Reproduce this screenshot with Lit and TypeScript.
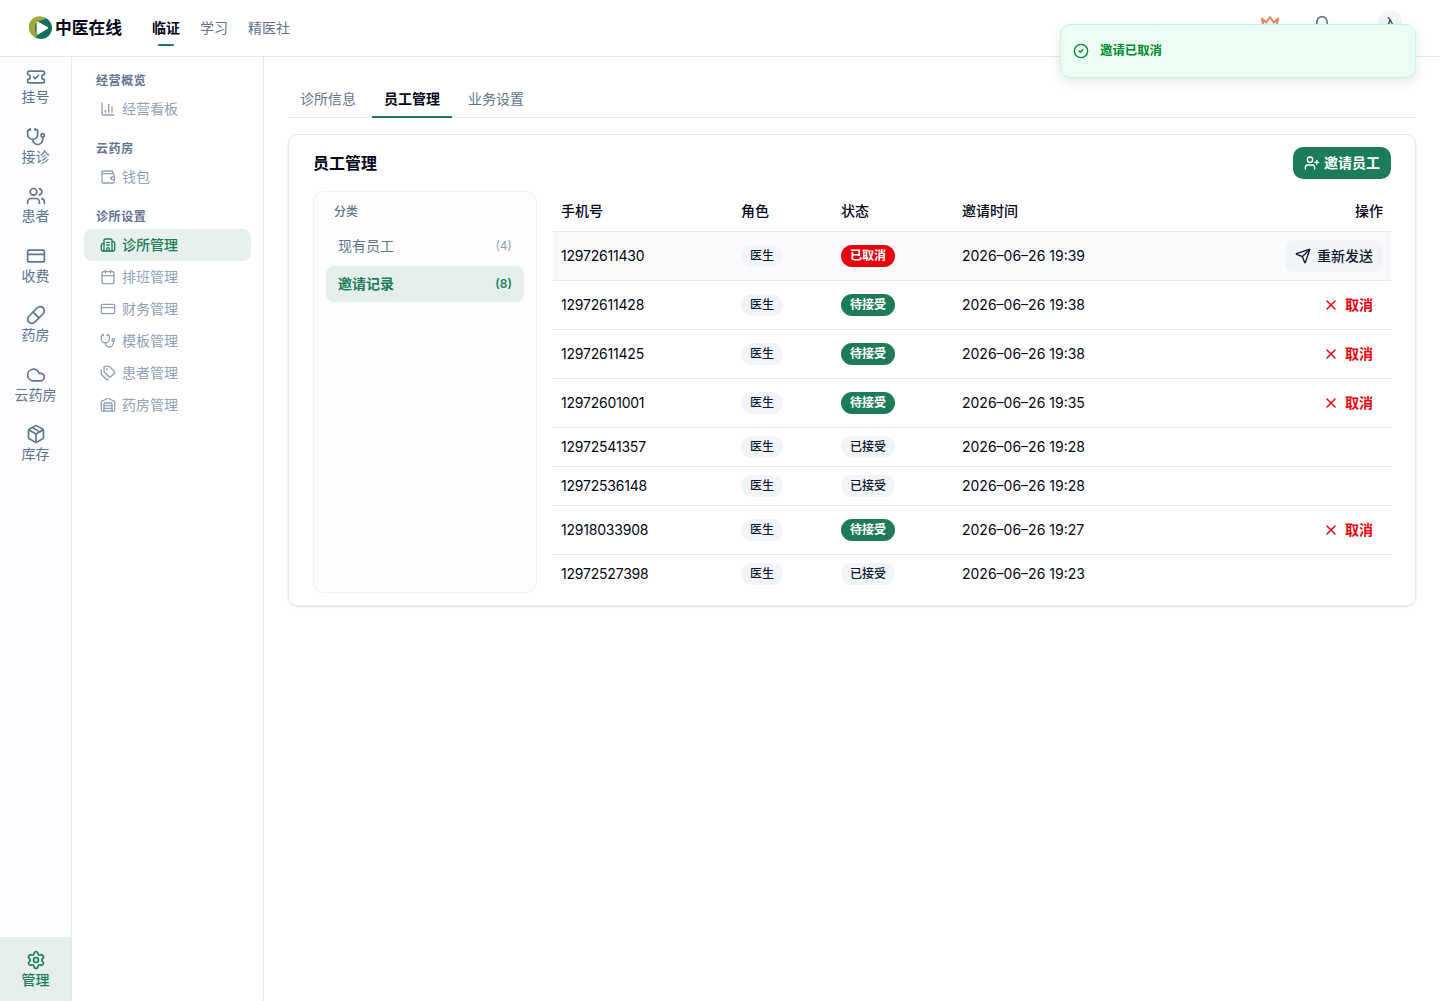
import { LitElement, html, css, svg, nothing } from "lit";
import { customElement, property } from "lit/decorators.js";
import { classMap } from "lit/directives/class-map.js";

const ICONS: Record<string, unknown> = {
  ticket: svg`<path d="M2 9a3 3 0 1 1 0 6v2a2 2 0 0 0 2 2h16a2 2 0 0 0 2-2v-2a3 3 0 1 1 0-6V7a2 2 0 0 0-2-2H4a2 2 0 0 0-2 2Z"/><path d="m9 12 2 2 4-4"/>`,
  stethoscope: svg`<path d="M11 2v2"/><path d="M5 2v2"/><path d="M5 3H4a2 2 0 0 0-2 2v4a6 6 0 0 0 12 0V5a2 2 0 0 0-2-2h-1"/><path d="M8 15a6 6 0 0 0 12 0v-3"/><circle cx="20" cy="10" r="2"/>`,
  users: svg`<path d="M16 21v-2a4 4 0 0 0-4-4H6a4 4 0 0 0-4 4v2"/><path d="M16 3.128a4 4 0 0 1 0 7.744"/><path d="M22 21v-2a4 4 0 0 0-3-3.87"/><circle cx="9" cy="7" r="4"/>`,
  card: svg`<rect width="20" height="14" x="2" y="5" rx="2"/><path d="M2 10h20"/>`,
  pill: svg`<path d="m10.5 20.5 10-10a4.95 4.95 0 1 0-7-7l-10 10a4.95 4.95 0 1 0 7 7Z"/><path d="m8.5 8.5 7 7"/>`,
  cloud: svg`<path d="M17.5 19H9a7 7 0 1 1 6.71-9h1.79a4.5 4.5 0 1 1 0 9Z"/>`,
  box: svg`<path d="M11 21.73a2 2 0 0 0 2 0l7-4A2 2 0 0 0 21 16V8a2 2 0 0 0-1-1.73l-7-4a2 2 0 0 0-2 0l-7 4A2 2 0 0 0 3 8v8a2 2 0 0 0 1 1.73z"/><path d="M12 22V12"/><path d="M3.29 7 12 12l8.71-5"/><path d="m7.5 4.27 9 5.15"/>`,
  settings: svg`<path d="M9.671 4.136a2.34 2.34 0 0 1 4.659 0 2.34 2.34 0 0 0 3.319 1.915 2.34 2.34 0 0 1 2.33 4.033 2.34 2.34 0 0 0 0 3.831 2.34 2.34 0 0 1-2.33 4.033 2.34 2.34 0 0 0-3.319 1.915 2.34 2.34 0 0 1-4.659 0 2.34 2.34 0 0 0-3.32-1.915 2.34 2.34 0 0 1-2.33-4.033 2.34 2.34 0 0 0 0-3.831A2.34 2.34 0 0 1 6.35 6.051a2.34 2.34 0 0 0 3.319-1.915"/><circle cx="12" cy="12" r="3"/>`,
  chart: svg`<path d="M3 3v16a2 2 0 0 0 2 2h16"/><path d="M18 17V9"/><path d="M13 17V5"/><path d="M8 17v-3"/>`,
  wallet: svg`<path d="M17 14h.01"/><path d="M19 7V4a1 1 0 0 0-1-1H5a2 2 0 0 0 0 4h15a1 1 0 0 1 1 1v4h-3a2 2 0 0 0 0 4h3a1 1 0 0 0 1-1v-2a1 1 0 0 0-1-1"/><path d="M3 5v14a2 2 0 0 0 2 2h15a1 1 0 0 0 1-1v-4"/>`,
  building: svg`<path d="M10 12h4"/><path d="M10 8h4"/><path d="M14 21v-3a2 2 0 0 0-4 0v3"/><path d="M6 10H4a2 2 0 0 0-2 2v7a2 2 0 0 0 2 2h16a2 2 0 0 0 2-2V9a2 2 0 0 0-2-2h-2"/><path d="M6 21V5a2 2 0 0 1 2-2h8a2 2 0 0 1 2 2v16"/>`,
  calendar: svg`<path d="M8 2v4"/><path d="M16 2v4"/><rect width="18" height="18" x="3" y="4" rx="2"/><path d="M3 10h18"/>`,
  tags: svg`<path d="M13.172 2a2 2 0 0 1 1.414.586l6.71 6.71a2.4 2.4 0 0 1 0 3.408l-4.592 4.592a2.4 2.4 0 0 1-3.408 0l-6.71-6.71A2 2 0 0 1 6 9.172V3a1 1 0 0 1 1-1z"/><path d="M2 7v6.172a2 2 0 0 0 .586 1.414l6.71 6.71a2.4 2.4 0 0 0 3.191.193"/><circle cx="10.5" cy="6.5" r=".5" fill="currentColor"/>`,
  warehouse: svg`<path d="M18 21V10a1 1 0 0 0-1-1H7a1 1 0 0 0-1 1v11"/><path d="M22 19a2 2 0 0 1-2 2H4a2 2 0 0 1-2-2V8a2 2 0 0 1 1.132-1.803l7.95-3.974a2 2 0 0 1 1.837 0l7.948 3.974A2 2 0 0 1 22 8z"/><path d="M6 13h12"/><path d="M6 17h12"/>`,
  userPlus: svg`<path d="M16 21v-2a4 4 0 0 0-4-4H6a4 4 0 0 0-4 4v2"/><circle cx="9" cy="7" r="4"/><path d="M19 8v6"/><path d="M22 11h-6"/>`,
  send: svg`<path d="M14.536 21.686a.5.5 0 0 0 .937-.024l6.5-19a.496.496 0 0 0-.635-.635l-19 6.5a.5.5 0 0 0-.024.937l7.93 3.18a2 2 0 0 1 1.112 1.11z"/><path d="m21.854 2.147-10.94 10.939"/>`,
  close: svg`<path d="M18 6 6 18"/><path d="m6 6 12 12"/>`,
  check: svg`<circle cx="12" cy="12" r="10"/><path d="m9 12 2 2 4-4"/>`,
  bell: svg`<path d="M10.268 21a2 2 0 0 0 3.464 0"/><path d="M3.262 15.326A1 1 0 0 0 4 17h16a1 1 0 0 0 .74-1.673C19.41 13.956 18 12.499 18 8A6 6 0 0 0 6 8c0 4.499-1.411 5.956-2.738 7.326"/>`,
  crown: svg`<path d="M2.200 5.500 5 18h14l2.800-12.500-5.300 4.700L12 3.600l-4.500 6.600Z" stroke="#f47c6c" stroke-width="2.400"/><path d="M2.200 5.500 4 13.500M7.500 10.200 12 3.600l4.500 6.600" stroke="#d9a24a" stroke-width="1"/>`,
};

@customElement("line-icon")
export class LineIcon extends LitElement {
  static styles = css`
    :host { display: block; flex: none; width: 16px; height: 16px; }
    svg { display: block; width: 100%; height: 100%; fill: none; stroke: currentColor; stroke-linecap: round; stroke-linejoin: round; }
  `;
  @property() name = "";
  @property({ type: Number }) weight = 2;
  render() {
    return html`<svg viewBox="0 0 24 24" stroke-width=${this.weight}>${ICONS[this.name]}</svg>`;
  }
}

const RAIL = [
  ["ticket", "挂号"], ["stethoscope", "接诊"], ["users", "患者"], ["card", "收费"],
  ["pill", "药房"], ["cloud", "云药房"], ["box", "库存"],
];

const MENU: { title: string; items: [string, string][] }[] = [
  { title: "经营概览", items: [["chart", "经营看板"]] },
  { title: "云药房", items: [["wallet", "钱包"]] },
  {
    title: "诊所设置",
    items: [
      ["building", "诊所管理"], ["calendar", "排班管理"], ["card", "财务管理"],
      ["stethoscope", "模板管理"], ["tags", "患者管理"], ["warehouse", "药房管理"],
    ],
  },
];

type Status = "cancelled" | "pending" | "accepted";
const STATUS: Record<Status, string> = { cancelled: "已取消", pending: "待接受", accepted: "已接受" };
const INVITES: [string, Status, string][] = [
  ["12972611430", "cancelled", "19:39"],
  ["12972611428", "pending", "19:38"],
  ["12972611425", "pending", "19:38"],
  ["12972601001", "pending", "19:35"],
  ["12972541357", "accepted", "19:28"],
  ["12972536148", "accepted", "19:28"],
  ["12918033908", "pending", "19:27"],
  ["12972527398", "accepted", "19:23"],
];

@customElement("app-root")
export class AppRoot extends LitElement {
  static styles = css`
    :host {
      display: flex; flex-direction: column; height: 1001px; overflow: hidden; position: relative;
      background: #fff; color: #020618;
      font-family: Inter, "Noto Sans CJK SC", sans-serif; font-size: 14px; line-height: 20px;
      --line: #e2e8f0; --muted: #62748e; --soft: #90a1b9; --green: #1c7c59; --tint: #e4eeeb;
    }
    * { box-sizing: border-box; }
    .header { display: flex; align-items: center; height: 57px; flex: none; border-bottom: 1px solid var(--line); padding: 0 38px 0 29px; }
    .logo { display: flex; align-items: center; gap: 2px; width: 123px; }
    .logo svg { width: 24px; height: 24px; display: block; }
    .logo-name { font-size: 16.8px; font-weight: 700; line-height: 24px; white-space: nowrap; }
    .nav { display: flex; gap: 20px; align-self: stretch; color: var(--muted); }
    .nav-item { display: flex; flex-direction: column; align-items: center; padding-top: 18px; }
    .nav-item.on { color: #020618; font-weight: 700; }
    .nav-item.on::after { content: ""; width: 16px; height: 2px; border-radius: 1px; background: var(--green); margin-top: 6px; }
    .tools { display: flex; align-items: flex-start; margin-left: auto; align-self: stretch; color: var(--muted); }
    .tools line-icon { width: 20px; height: 20px; margin-top: 14px; }
    .tools .crown { margin-right: 32px; }
    .tools .bell { margin-right: 46px; margin-top: 15px; }
    .avatar { width: 24px; height: 24px; margin-top: 10px; border-radius: 50%; background: #f1f5f9; color: #0f172b; font-size: 12px; line-height: 25px; text-align: center; }
    .body { display: flex; flex: 1; min-height: 0; }
    .rail { width: 72px; flex: none; display: flex; flex-direction: column; background: #fafcff; border-right: 1px solid var(--line); color: var(--muted); }
    .rail-item { display: flex; flex-direction: column; align-items: center; padding: 10px 0; line-height: 19.5px; }
    .rail-item line-icon { width: 20px; height: 20px; }
    .rail-item.on { margin-top: auto; height: 64px; padding: 13px 0 11px; background: var(--tint); color: var(--green); font-weight: 500; }
    .menu { width: 192px; flex: none; border-right: 1px solid var(--line); padding: 12px; display: flex; flex-direction: column; gap: 12px; }
    .menu-title { height: 24px; padding-left: 12px; line-height: 23px; font-size: 12px; font-weight: 700; letter-spacing: 0.6px; color: var(--muted); }
    .menu-item { display: flex; align-items: center; gap: 6px; height: 32px; padding-left: 16px; border-radius: 8px; color: var(--soft); }
    .menu-item.on { background: #e8f0ed; color: var(--green); font-weight: 500; }
    .main { flex: 1; min-width: 0; padding: 24px; }
    .tabs { display: flex; gap: 4px; height: 37px; border-bottom: 1px solid var(--line); color: var(--muted); }
    .tab { padding: 8px 12px 0; height: 37px; }
    .tab.on { color: #020618; font-weight: 700; border-bottom: 2px solid var(--green); }
    .card { margin-top: 16px; border: 1px solid var(--line); border-radius: 10px; padding: 12px 24px; box-shadow: 0 1px 3px rgba(0,0,0,.1), 0 1px 2px -1px rgba(0,0,0,.1); }
    .card-head { display: flex; align-items: center; justify-content: space-between; height: 32px; margin-bottom: 12px; }
    .card-title { font-size: 16px; font-weight: 700; }
    .invite { display: flex; align-items: center; gap: 4px; height: 32px; padding: 0 11px; border-radius: 10px; background: var(--green); color: #fff; font-weight: 700; }
    .split { display: flex; gap: 16px; }
    .cats { width: 224px; flex: none; border: 1px solid #eef2f6; border-radius: 10px; background: #fdfdfd; padding: 12px; display: flex; flex-direction: column; gap: 2px; }
    .cats-title { height: 22px; line-height: 16px; padding-left: 8px; font-size: 12px; font-weight: 500; color: var(--muted); }
    .cat { display: flex; align-items: center; justify-content: space-between; height: 36px; padding: 0 12px; border-radius: 8px; color: var(--muted); }
    .count { font-size: 12px; color: var(--soft); }
    .cat.on, .cat.on .count { color: var(--green); font-weight: 600; }
    .cat.on { background: var(--tint); }
    .table { flex: 1; }
    .row { display: grid; grid-template-columns: 180px 100px 121px 1fr 130px; align-items: center; padding: 0 0 0 8px; height: 39px; border-bottom: 1px solid var(--line); }
    .row.head { height: 41px; font-weight: 500; }
    .row.tall { height: 49px; }
    .row.hover { background: #f9fafc; }
    .row:last-child { border-bottom: 0; height: 38px; }
    .num { letter-spacing: -0.21px; }
    .time { letter-spacing: 0; }
    .cell-op { display: flex; justify-content: flex-end; padding-right: 8px; }
    .badge { justify-self: start; height: 22px; line-height: 22px; padding: 0 9px; border-radius: 11px; font-size: 12px; font-weight: 500; background: #f1f5f9; color: #0f172b; }
    .badge.pending { background: var(--green); color: #fff; font-weight: 700; }
    .badge.cancelled { background: #e7000b; color: #fff; font-weight: 700; }
    .op { display: flex; align-items: center; gap: 6px; height: 32px; padding: 0 10px; border-radius: 10px; font-weight: 700; color: #e7000b; }
    .op.resend { background: #f1f5f9; color: #0f172b; font-weight: 500; }
    .toast { position: absolute; left: 1060px; top: 24px; width: 356px; height: 54px; display: flex; align-items: center; gap: 11px; padding-left: 12px; border: 1px solid #bffcd9; border-radius: 10px; background: #ecfdf3; color: #008a2e; font-size: 12.4px; font-weight: 700; box-shadow: 0 4px 12px rgba(0,0,0,.1); }
  `;

  private op(status: Status) {
    if (status === "cancelled") return html`<div class="op resend"><line-icon name="send"></line-icon>重新发送</div>`;
    if (status === "pending") return html`<div class="op"><line-icon name="close"></line-icon>取消</div>`;
    return nothing;
  }

  render() {
    return html`
      <header class="header">
        <div class="logo">
          <svg viewBox="0 0 24 24">
            <circle cx="12" cy="12" r="11" fill="#14705a"/>
            <path d="M17 2.200A11 11 0 1 0 5.500 20.900C8 21.500 9 20 7.200 18C5.500 15 6 8 7.500 6C10 4.500 14 4.500 17 2.200Z" fill="#a3a838"/>
            <path d="M7.600 6.800c0-1 .8-1.400 1.600-1l9.300 5.200c.8.5.8 1.200 0 1.700l-9.300 5.700c-.8.5-1.600 0-1.600-.9Z" fill="#fff"/>
          </svg>
          <span class="logo-name">中医在线</span>
        </div>
        <nav class="nav">
          <div class="nav-item on">临证</div><div class="nav-item">学习</div><div class="nav-item">精医社</div>
        </nav>
        <div class="tools">
          <line-icon class="crown" name="crown"></line-icon>
          <line-icon class="bell" name="bell"></line-icon>
          <div class="avatar">入</div>
        </div>
      </header>
      <div class="body">
        <aside class="rail">
          ${RAIL.map(([icon, label]) => html`<div class="rail-item"><line-icon name=${icon}></line-icon><span>${label}</span></div>`)}
          <div class="rail-item on"><line-icon name="settings"></line-icon><span>管理</span></div>
        </aside>
        <aside class="menu">
          ${MENU.map((group) => html`<section>
            <div class="menu-title">${group.title}</div>
            ${group.items.map(([icon, label]) => html`<div class=${classMap({ "menu-item": true, on: label === "诊所管理" })}>
              <line-icon name=${icon}></line-icon><span>${label}</span></div>`)}
          </section>`)}
        </aside>
        <main class="main">
          <div class="tabs"><div class="tab">诊所信息</div><div class="tab on">员工管理</div><div class="tab">业务设置</div></div>
          <section class="card">
            <div class="card-head">
              <div class="card-title">员工管理</div>
              <div class="invite"><line-icon name="userPlus"></line-icon>邀请员工</div>
            </div>
            <div class="split">
              <div class="cats">
                <div class="cats-title">分类</div>
                <div class="cat"><span>现有员工</span><span class="count">(4)</span></div>
                <div class="cat on"><span>邀请记录</span><span class="count">(8)</span></div>
              </div>
              <div class="table">
                <div class="row head"><span>手机号</span><span>角色</span><span>状态</span><span>邀请时间</span><span class="cell-op">操作</span></div>
                ${INVITES.map(([phone, status, time]) => html`
                  <div class=${classMap({ row: true, tall: status !== "accepted", hover: status === "cancelled" })}>
                    <span class="num">${phone}</span>
                    <span class="badge">医生</span>
                    <span class=${`badge ${status}`}>${STATUS[status]}</span>
                    <span class="time">2026–06–26 ${time}</span>
                    <div class="cell-op">${this.op(status)}</div>
                  </div>`)}
              </div>
            </div>
          </section>
        </main>
      </div>
      <div class="toast"><line-icon name="check"></line-icon><span>邀请已取消</span></div>
    `;
  }
}
